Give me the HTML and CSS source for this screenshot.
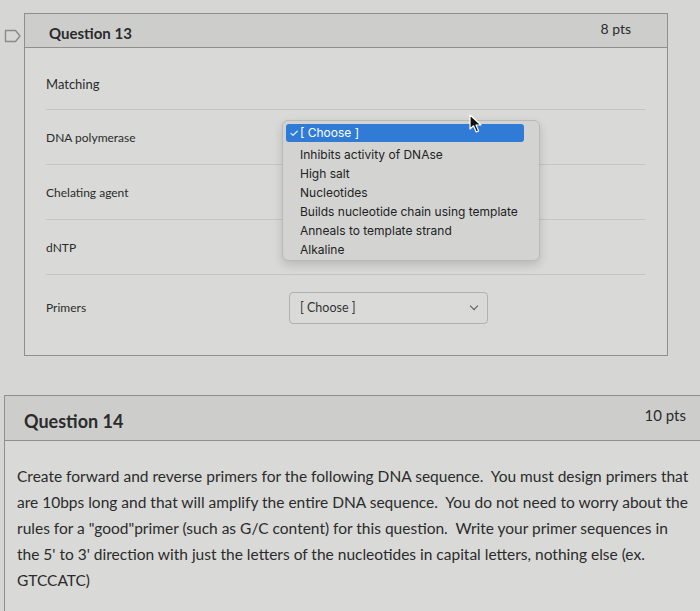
FILE: index.html
```html
<!DOCTYPE html>
<html lang="en">
<head>
  <meta charset="UTF-8" />
  <title>Quiz - Questions 13 and 14</title>
  <link rel="stylesheet" href="styles.css">
</head>
<body>

  <div class="question-row">
    <div class="flag">
      <svg width="18" height="14" viewBox="0 0 18 14">
        <path d="M1.5 1.5 H11.5 L16 7 L11.5 12.5 H1.5 Z" fill="none" stroke="#8a8a88" stroke-width="1.4" stroke-linejoin="round"/>
      </svg>
    </div>

    <section class="question q13">
      <div class="q-header">
        <h2>Question 13</h2>
        <span class="pts">8 pts</span>
      </div>
      <div class="q-body">
        <p class="intro">Matching</p>

        <div class="match-row">
          <span class="label">DNA polymerase</span>
          <div class="select-wrap">
            <div class="select covered">[ Choose ]<span class="chevron"></span></div>
            <ul class="menu">
              <li class="active"><span class="check">&#10003;</span>[ Choose ]</li>
              <li>Inhibits activity of DNAse</li>
              <li>High salt</li>
              <li>Nucleotides</li>
              <li>Builds nucleotide chain using template</li>
              <li>Anneals to template strand</li>
              <li>Alkaline</li>
            </ul>
            <svg class="cursor" width="14" height="20" viewBox="0 0 14 20">
              <path d="M1 1 L1 15 L4.5 11.8 L7.2 18 L9.6 17 L7 11 L12 11 Z" fill="#111" stroke="#fff" stroke-width="1.2" stroke-linejoin="round"/>
            </svg>
          </div>
        </div>

        <div class="match-row">
          <span class="label">Chelating agent</span>
          <div class="select-wrap">
            <div class="select covered">[ Choose ]<span class="chevron"></span></div>
          </div>
        </div>

        <div class="match-row">
          <span class="label">dNTP</span>
          <div class="select-wrap">
            <div class="select covered">[ Choose ]<span class="chevron"></span></div>
          </div>
        </div>

        <div class="match-row last">
          <span class="label">Primers</span>
          <div class="select-wrap">
            <div class="select">[ Choose ]<span class="chevron"></span></div>
          </div>
        </div>
      </div>
    </section>
  </div>

  <section class="question q14">
    <div class="q-header">
      <h2>Question 14</h2>
      <span class="pts">10 pts</span>
    </div>
    <div class="q-body">
      <p class="text">Create forward and reverse primers for the following DNA sequence.&nbsp; You must design primers that are 10bps long and that will amplify the entire DNA sequence.&nbsp; You do not need to worry about the rules for a "good"primer (such as G/C content) for this question.&nbsp; Write your primer sequences in the 5' to 3' direction with just the letters of the nucleotides in capital letters, nothing else (ex. GTCCATC)</p>
    </div>
  </section>

</body>
</html>
```

FILE: styles.css
```css
:root {
  --page: #d6d7d5;
  --card: #d9dad8;
  --header: #cdcecc;
  --border: #8f908e;
  --rule: #c4c5c3;
  --text: #2b2b2b;
  --blue: #2f7bd6;
}

* {
  box-sizing: border-box;
}

html, body {
  margin: 0;
  padding: 0;
  width: 700px;
  height: 611px;
  overflow: hidden;
  background: var(--page);
  font-family: 'Lato', sans-serif;
  color: var(--text);
}

.question-row {
  display: flex;
  align-items: flex-start;
  padding-top: 13px;
}

.flag {
  width: 24px;
  padding: 14px 0 0 4px;
}

.question {
  background: var(--card);
  border: 1px solid var(--border);
}

.q-header {
  display: flex;
  justify-content: space-between;
  align-items: center;
  background: var(--header);
  border-bottom: 1px solid var(--border);
}

.q-header h2 {
  margin: 0;
  font-weight: 700;
}

.pts {
  font-weight: 400;
}

/* question 13 */

.q13 {
  width: 644px;
  height: 343px;
}

.q13 .q-header {
  height: 34px;
  padding: 0 36px 0 24px;
}

.q13 .q-header h2 {
  font-size: 15px;
  padding-top: 5px;
}

.q13 .pts {
  font-size: 14px;
  padding-bottom: 4px;
}

.q13 .q-body {
  padding: 0 22px 0 21px;
}

.intro {
  margin: 0;
  padding: 28px 0 17px;
  font-size: 13px;
  line-height: 16px;
}

.match-row {
  display: flex;
  align-items: center;
  height: 55px;
  border-top: 1px solid var(--rule);
  font-size: 12px;
}

.match-row.last {
  height: 66px;
}

.label {
  width: 243px;
}

.select-wrap {
  position: relative;
}

.select {
  display: flex;
  align-items: center;
  width: 199px;
  height: 32px;
  padding: 0 10px;
  border: 1px solid #b1b2b0;
  border-radius: 4px;
  background: #dadbd9;
  font-size: 12.5px;
  color: #333;
}

/* selects that sit under the open menu */
.select.covered {
  visibility: hidden;
}

.chevron {
  margin-left: auto;
  width: 6px;
  height: 6px;
  border-right: 1.5px solid #555;
  border-bottom: 1.5px solid #555;
  transform: translateY(-2px) rotate(45deg);
}

.menu {
  position: absolute;
  z-index: 5;
  top: -1px;
  left: -7px;
  width: 258px;
  margin: 0;
  padding: 3px 15px 1px 3px;
  list-style: none;
  background: #d3d4d2;
  border: 1px solid #b9bab8;
  border-radius: 6px;
  box-shadow: 0 4px 10px rgba(0, 0, 0, 0.15);
  font-family: 'Inter', sans-serif;
  font-size: 12px;
  color: #222;
}

.menu li {
  height: 19px;
  line-height: 19px;
  padding-left: 14px;
  white-space: nowrap;
}

.menu li.active {
  height: 18px;
  line-height: 18px;
  margin-bottom: 3px;
  padding-left: 3px;
  background: var(--blue);
  border-radius: 3px;
  color: #fff;
}

.check {
  display: inline-block;
  width: 11px;
  font-size: 11px;
}

.cursor {
  position: absolute;
  z-index: 6;
  top: -7px;
  left: 180px;
}

/* question 14 */

.q14 {
  margin: 39px 0 0 4px;
  width: 710px;
  height: 240px;
  border-right: none;
}

.q14 .q-header {
  height: 45px;
  padding: 0 28px 0 19px;
}

.q14 .q-header h2 {
  font-size: 18px;
  padding-top: 6px;
}

.q14 .pts {
  font-size: 15px;
  padding-bottom: 6px;
}

.q14 .q-body {
  padding: 22px 12px 0 12px;
}

.text {
  margin: 0;
  width: 674px;
  font-size: 15.5px;
  line-height: 26px;
}
```
